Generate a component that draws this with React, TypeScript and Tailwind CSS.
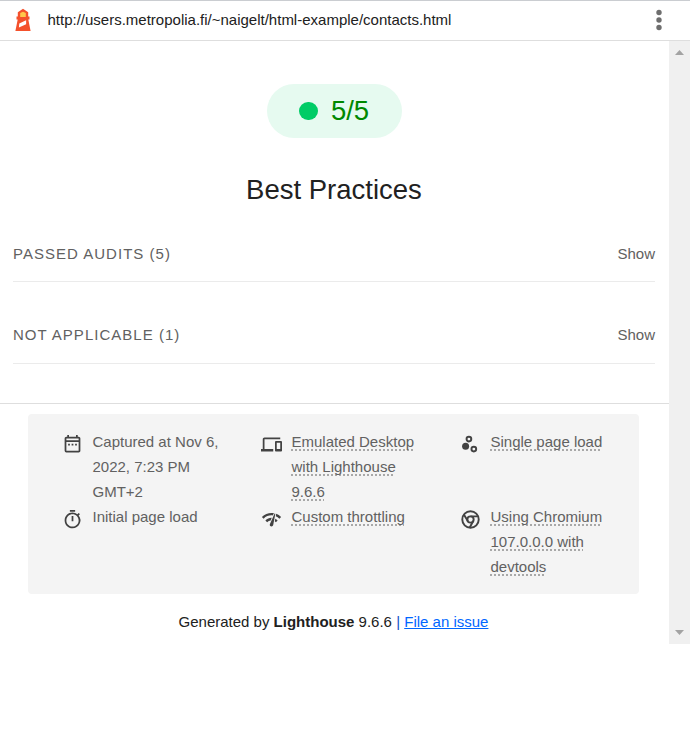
import type { ReactNode } from 'react';

const ICONS: Record<string, ReactNode> = {
  date: (
    <path d="M19 3h-1V1h-2v2H8V1H6v2H5c-1.11 0-2 .9-2 2v14a2 2 0 0 0 2 2h14c1.1 0 2-.9 2-2V5c0-1.1-.9-2-2-2zm0 16H5V9h14v10zM5 7V5h14v2H5zm2 4h2v2H7zm4 0h2v2h-2zm4 0h2v2h-2z" />
  ),
  devices: (
    <path d="M4 6h18V4H4c-1.1 0-2 .9-2 2v11H0v3h14v-3H4V6zm19 2h-6c-.55 0-1 .45-1 1v10c0 .55.45 1 1 1h6c.55 0 1-.45 1-1V9c0-.55-.45-1-1-1zm-1 9h-4v-7h4v7z" />
  ),
  samples: (
    <>
      <circle cx="6.4" cy="14" r="4" />
      <circle cx="10.2" cy="5.8" r="2.7" fill="none" stroke="currentColor" strokeWidth="2.2" />
      <circle cx="15.8" cy="17.2" r="2.7" fill="none" stroke="currentColor" strokeWidth="2.2" />
    </>
  ),
  timer: (
    <path d="M15 1H9v2h6V1zm-4 13h2V8h-2v6zm8.03-6.61 1.42-1.42c-.43-.51-.9-.99-1.41-1.41l-1.42 1.42A8.96 8.96 0 0 0 12 4c-4.97 0-9 4.03-9 9s4.02 9 9 9a8.994 8.994 0 0 0 7.03-14.61zM12 20c-3.87 0-7-3.13-7-7s3.13-7 7-7 7 3.13 7 7-3.13 7-7 7z" />
  ),
  network: (
    <path d="M15.9 5c-.17 0-.32.09-.41.23l-.07.15-5.18 11.65c-.16.29-.26.61-.26.96 0 1.11.9 2.01 2.01 2.01.96 0 1.77-.68 1.96-1.59l.01-.03L16.4 5.5c0-.28-.22-.5-.5-.5zM1 9l2 2c2.88-2.88 6.79-4.08 10.53-3.62l1.19-2.68C9.89 3.84 4.74 5.27 1 9zm20 2l2-2c-1.64-1.64-3.55-2.82-5.59-3.57l-.53 2.82c1.5.62 2.9 1.53 4.12 2.75zm-4 4l2-2c-.8-.8-1.7-1.42-2.66-1.89l-.55 2.92c.42.27.83.59 1.21.97zM5 13l2 2c1.13-1.13 2.56-1.79 4.03-2l1.28-2.88c-2.63-.08-5.3.87-7.31 2.88z" />
  ),
  chrome: (
    <g fill="none" stroke="currentColor" strokeWidth="2.2">
      <circle cx="12" cy="12" r="9.4" />
      <circle cx="12" cy="12" r="3.6" />
      <path d="M12 8.4h8.6M8.9 13.8 4.4 6.4M15.1 13.8 11 21.4" />
    </g>
  ),
};

function MetaItem({ icon, text, plain }: { icon: string; text: string; plain?: boolean }) {
  return (
    <li className="flex gap-[9.5px]">
      <svg viewBox="0 0 24 24" className="mt-[5px] size-[21px] shrink-0 fill-current text-[#424242]">
        {ICONS[icon]}
      </svg>
      <span className="w-[130px] leading-[25px]">
        <span className={plain ? '' : 'underline decoration-[#a8a8a8] decoration-dotted decoration-2 underline-offset-[2px] [text-decoration-skip-ink:none]'}>
          {text}
        </span>
      </span>
    </li>
  );
}

function Clump({ title }: { title: string }) {
  return (
    <div className="flex items-start justify-between border-b border-[#ebebeb] text-[#616161]">
      <span className="tracking-[1.02px]">{title}</span>
      <span>Show</span>
    </div>
  );
}

function Lighthouse() {
  return (
    <svg viewBox="0 0 16 24" className="h-[24px] w-[16px]">
      <path d="M8 .8 13.2 4.2V8.5h1.3v3h-1.2L15.6 23H.4L2.7 11.5H1.5v-3h1.3V4.2z" fill="#f4512c" />
      <path d="M5.2 5 8 3.7 10.8 5v4H5.2z" fill="#ffc84a" />
      <path d="m4.3 15.4 6.8-3.1v4l-7.2 3.2z" fill="#fff" />
    </svg>
  );
}

export default function App() {
  return (
    <div className="h-[733px] w-[690px] overflow-hidden bg-white font-['Liberation_Sans',Arial,sans-serif] text-[15px] leading-[25px] text-[#212121]">
      <header className="flex h-[41px] items-center border-t border-b border-t-[#cacdd1] border-b-[#dedede] pr-[28px] pb-px pl-[15px]">
        <Lighthouse />
        <span className="mb-px ml-[16.5px]">http://users.metropolia.fi/~naigelt/html-example/contacts.html</span>
        <svg viewBox="0 0 6 22" className="ml-auto h-[22px] w-[6px] fill-[#6e6e6e]">
          <circle cx="3" cy="3.5" r="2.7" />
          <circle cx="3" cy="11" r="2.7" />
          <circle cx="3" cy="18.5" r="2.7" />
        </svg>
      </header>
      <div className="flex h-[603px]">
        <main className="w-[669px]">
          <section className="h-[362px] pt-[43px] pr-[14px] pl-[13px]">
            <div className="mx-auto flex h-[54px] w-[135px] items-center justify-center gap-[13px] rounded-full bg-[#e6faf0] pb-[2px] text-[27.5px] text-[#008800]">
              <span className="mt-[2px] h-[18px] w-[19px] rounded-full bg-[#00cc66]" />
              <span>5/5</span>
            </div>
            <h1 className="mt-[34px] h-[36px] text-center text-[27.5px] leading-[36px]">Best Practices</h1>
            <div className="mt-[33px] grid grid-rows-[41px_42px] gap-[40px]">
              <Clump title="PASSED AUDITS (5)" />
              <Clump title="NOT APPLICABLE (1)" />
            </div>
          </section>
          <footer className="border-t border-[#dedede] pt-[10px]">
            <ul className="ml-[28px] grid h-[180px] w-[611px] grid-cols-[199px_199px_170px] content-start rounded-[4px] bg-[#f4f4f4] pt-[15px] pl-[34px] text-[#616161]">
              <MetaItem icon="date" text="Captured at Nov 6, 2022, 7:23 PM GMT+2" plain />
              <MetaItem icon="devices" text="Emulated Desktop with Lighthouse 9.6.6" />
              <MetaItem icon="samples" text="Single page load" />
              <MetaItem icon="timer" text="Initial page load" plain />
              <MetaItem icon="network" text="Custom throttling" />
              <MetaItem icon="chrome" text="Using Chromium 107.0.0.0 with devtools" />
            </ul>
            <p className="mt-[15px] pr-[2px] text-center">
              Generated by <b>Lighthouse</b> 9.6.6 <span className="text-[#0c50c7]">|</span>{' '}
              <a className="text-[#0066ff] underline">File an issue</a>
            </p>
          </footer>
        </main>
        <aside className="flex w-[21px] flex-col items-center justify-between bg-[#f0f0f0] pt-[9px] pb-[9px]">
          <svg viewBox="0 0 9 5" className="h-[5px] w-[9px] fill-[#a3a3a3]"><path d="M0 5h9L4.5 0z" /></svg>
          <svg viewBox="0 0 9 5" className="h-[5px] w-[9px] fill-[#a3a3a3]"><path d="M0 0h9L4.5 5z" /></svg>
        </aside>
      </div>
    </div>
  );
}
